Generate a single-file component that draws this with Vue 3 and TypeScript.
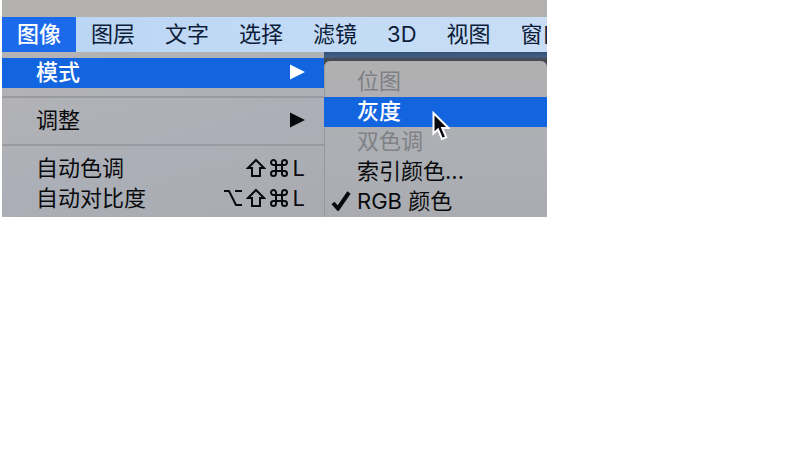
<script setup lang="ts">
type KeySymbol = 'option' | 'shift' | 'command'

interface MenuItem {
  label: string
  keys?: KeySymbol[]
  letter?: string
  submenu?: boolean
  active?: boolean
}

interface ModeItem {
  label: string
  disabled?: boolean
  active?: boolean
  checked?: boolean
}

const menus: string[] = ['图像', '图层', '文字', '选择', '滤镜', '3D', '视图', '窗口']

const groups: MenuItem[][] = [
  [{ label: '模式', submenu: true, active: true }],
  [{ label: '调整', submenu: true }],
  [
    { label: '自动色调', keys: ['shift', 'command'], letter: 'L' },
    { label: '自动对比度', keys: ['option', 'shift', 'command'], letter: 'L' },
  ],
]

const modes: ModeItem[] = [
  { label: '位图', disabled: true },
  { label: '灰度', active: true },
  { label: '双色调', disabled: true },
  { label: '索引颜色...' },
  { label: 'RGB 颜色', checked: true },
]

const keyPaths: Record<KeySymbol, string> = {
  option: 'M1 3H6L13 17H19M12 3H19',
  shift: 'M10 2L18 10H14V18H6V10H2Z',
  command:
    'M7 7H13V13H7ZM7 7V4.5A2.5 2.5 0 1 0 4.5 7ZM13 7H15.5A2.5 2.5 0 1 0 13 4.5ZM13 13V15.5A2.5 2.5 0 1 0 15.5 13ZM7 13H4.5A2.5 2.5 0 1 0 7 15.5Z',
}
</script>

<template>
  <main class="screen">
    <nav class="menubar">
      <button
        v-for="(name, i) in menus"
        :key="name"
        type="button"
        class="menubar-item"
        :class="{ open: i === 0 }"
      >{{ name }}</button>
    </nav>
    <div class="panels">
      <div class="menu">
        <div v-for="(group, g) in groups" :key="g" class="group">
          <button
            v-for="item in group"
            :key="item.label"
            type="button"
            class="row"
            :class="{ active: item.active }"
          >
            <span class="label">{{ item.label }}</span>
            <svg v-if="item.submenu" class="arrow" viewBox="0 0 15 16"><path d="M0 0.5L15 8L0 15.5Z" /></svg>
            <span v-if="item.keys" class="shortcut">
              <svg v-for="key in item.keys" :key="key" class="key" viewBox="0 0 20 20"><path :d="keyPaths[key]" /></svg>
              <span class="letter">{{ item.letter }}</span>
            </span>
          </button>
        </div>
      </div>
      <div class="backdrop">
        <div class="submenu">
          <button
            v-for="mode in modes"
            :key="mode.label"
            type="button"
            class="row mode"
            :class="{ active: mode.active }"
            :disabled="mode.disabled"
          >
            <span class="mark">
              <svg v-if="mode.checked" class="check" viewBox="0 0 20 20"><path d="M2 12L7 17.5L18 1.5" /></svg>
            </span>
            <span class="label">{{ mode.label }}</span>
            <svg v-if="mode.active" class="cursor" viewBox="0 0 18 30">
              <path d="M1.5 2V22.5L6 18.5L10 28L14.2 26.2L10.2 17H16.5Z" />
            </svg>
          </button>
        </div>
      </div>
    </div>
  </main>
</template>

<style>
body {
  background: #fff;
}
</style>

<style scoped>
.screen {
  box-sizing: border-box;
  max-width: 547px;
  padding-left: 2px;
  overflow: hidden;
  font-family: Inter, "Noto Sans CJK SC", sans-serif;
  font-size: 22px;
  line-height: 30px;
}

button {
  margin: 0;
  border: 0;
  background: none;
  color: inherit;
  font: inherit;
  text-align: left;
  white-space: nowrap;
}

.menubar {
  display: flex;
  overflow: hidden;
  border-top: 17px solid #b3b1ae;
  background: linear-gradient(90deg, #b9d5f4, #c9def6);
  color: #0d1c38;
}

.menubar-item {
  flex: none;
  height: 35px;
  padding: 0 15px 2px;
}

.menubar-item.open {
  background: #1b6aeb;
  color: #fff;
  font-weight: 500;
}

.panels {
  display: flex;
}

.menu {
  flex: 0 0 322px;
  box-sizing: border-box;
  padding: 6px 0 3px;
  background: linear-gradient(165deg, #b5b4b5, #acafb7 55%, #a9abb0);
  color: #090a0d;
}

.group + .group {
  padding-top: 8px;
  border-top: 2px solid #999ba0;
  margin-top: 8px;
}

.row {
  display: flex;
  align-items: center;
  position: relative;
  width: 100%;
  height: 30px;
  padding: 0 19px 2px 34px;
}

.row .label {
  flex: 1;
}

.row.active {
  background: #1264df;
  color: #fff;
  font-weight: 500;
}

.arrow {
  width: 15px;
  height: 16px;
  fill: currentColor;
}

.shortcut {
  display: flex;
  align-items: center;
  gap: 3px;
}

.key {
  width: 20px;
  height: 20px;
  fill: none;
  stroke: currentColor;
  stroke-width: 2;
}

.letter {
  width: 13px;
  text-align: right;
}

.backdrop {
  flex: 1;
  min-width: 0;
  padding-top: 9px;
  background: linear-gradient(#365175 0, #426088 5px, #46515f 6px, #44484e 9px, #44484e);
}

.submenu {
  box-sizing: border-box;
  padding-top: 6px;
  border-radius: 6px 6px 0 0;
  background: linear-gradient(#b1b0b1, #acafb4 60%, #a9abb0);
  box-shadow: inset 1px 0 #96989c;
  color: #090a0d;
}

.row.mode {
  padding: 0 0 2px;
}

.row.mode:disabled {
  color: #7f8185;
}

.mark {
  display: flex;
  flex: 0 0 33px;
  justify-content: center;
}

.check {
  width: 20px;
  height: 20px;
  fill: none;
  stroke: currentColor;
  stroke-width: 4;
}

.cursor {
  position: absolute;
  z-index: 1;
  top: 14px;
  left: 108px;
  width: 18px;
  height: 30px;
  fill: #080a10;
  stroke: #fff;
  stroke-width: 2;
}
</style>
